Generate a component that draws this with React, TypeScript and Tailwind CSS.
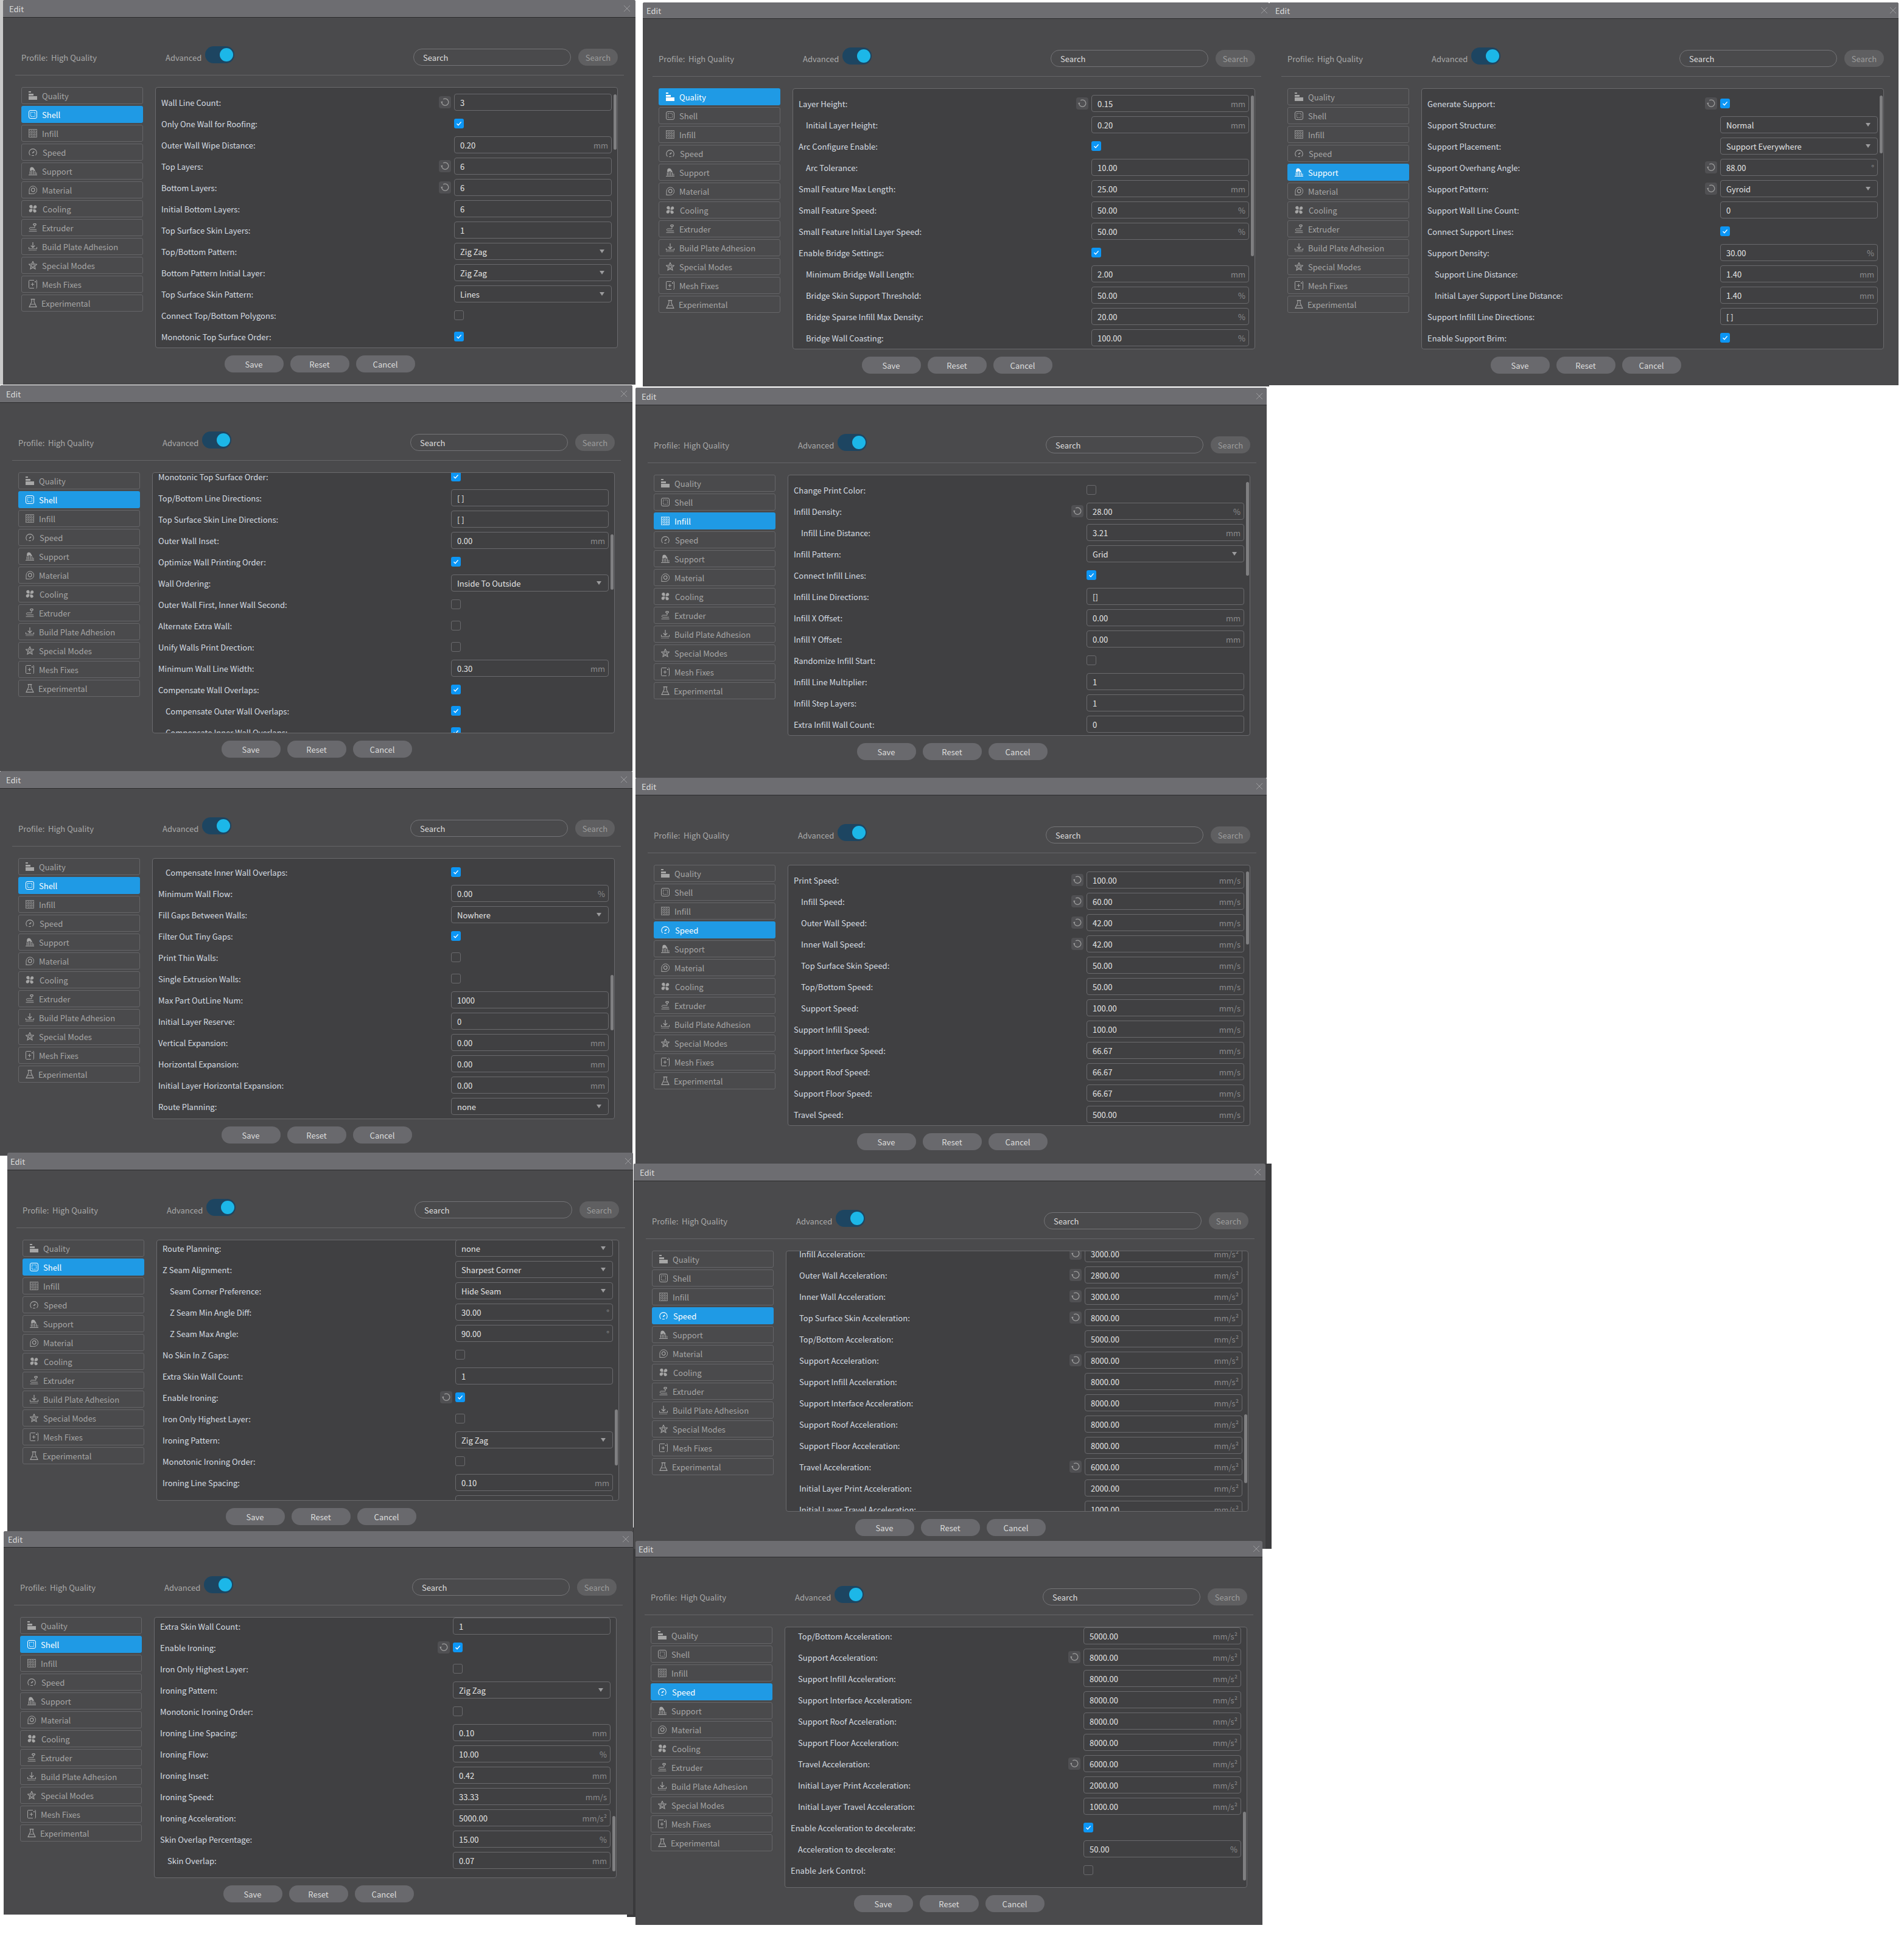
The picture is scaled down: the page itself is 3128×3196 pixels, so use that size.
type Row = { l: string; k: "i" | "s" | "c" | "u"; v?: string; u?: string; ind?: boolean; r?: boolean };

const num = (l: string, v: string, u?: string, r?: boolean, ind?: boolean): Row => ({ l, k: "i", v, u, r, ind });
const sel = (l: string, v: string, r?: boolean, ind?: boolean): Row => ({ l, k: "s", v, r, ind });
const chk = (l: string, r?: boolean, ind?: boolean): Row => ({ l, k: "c", r, ind });
const off = (l: string, ind?: boolean): Row => ({ l, k: "u", ind });
const acc = (l: string, v: string, r?: boolean): Row => num(l, v, "mm/s²", r, true);

type Win = {
  x: number; y: number; w: number; h: number; pad: number; title: number;
  active: string; top: number; barTop: number; barH: number; rows: Row[];
};

const windows: Win[] = [
  {
    x: 5, y: 0, w: 1039, h: 632, pad: 30, title: 29, active: "Shell", top: 11, barTop: 12, barH: 91,
    rows: [
      num("Wall Line Count:", "3", undefined, true), chk("Only One Wall for Roofing:"), num("Outer Wall Wipe Distance:", "0.20", "mm"),
      num("Top Layers:", "6", undefined, true), num("Bottom Layers:", "6", undefined, true), num("Initial Bottom Layers:", "6"),
      num("Top Surface Skin Layers:", "1"), sel("Top/Bottom Pattern:", "Zig Zag"), sel("Bottom Pattern Initial Layer:", "Zig Zag"),
      sel("Top Surface Skin Pattern:", "Lines"), off("Connect Top/Bottom Polygons:"), chk("Monotonic Top Surface Order:"),
    ],
  },
  {
    x: 1056, y: 4, w: 1029, h: 631, pad: 26, title: 27, active: "Quality", top: 11, barTop: 12, barH: 264,
    rows: [
      num("Layer Height:", "0.15", "mm", true), num("Initial Layer Height:", "0.20", "mm", false, true), chk("Arc Configure Enable:"),
      num("Arc Tolerance:", "10.00", undefined, false, true), num("Small Feature Max Length:", "25.00", "mm"), num("Small Feature Speed:", "50.00", "%"),
      num("Small Feature Initial Layer Speed:", "50.00", "%"), chk("Enable Bridge Settings:"), num("Minimum Bridge Wall Length:", "2.00", "mm", false, true),
      num("Bridge Skin Support Threshold:", "50.00", "%", false, true), num("Bridge Sparse Infill Max Density:", "20.00", "%", false, true),
      num("Bridge Wall Coasting:", "100.00", "%", false, true),
    ],
  },
  {
    x: 2085, y: 4, w: 1034, h: 629, pad: 30, title: 27, active: "Support", top: 11, barTop: 12, barH: 95,
    rows: [
      chk("Generate Support:", true), sel("Support Structure:", "Normal"), sel("Support Placement:", "Support Everywhere"),
      num("Support Overhang Angle:", "88.00", "°", true), sel("Support Pattern:", "Gyroid", true), num("Support Wall Line Count:", "0"),
      chk("Connect Support Lines:"), num("Support Density:", "30.00", "%"), num("Support Line Distance:", "1.40", "mm", false, true),
      num("Initial Layer Support Line Distance:", "1.40", "mm", false, true), num("Support Infill Line Directions:", "[ ]"), chk("Enable Support Brim:"),
    ],
  },
  {
    x: 0, y: 633, w: 1039, h: 634, pad: 30, title: 29, active: "Shell", top: -7, barTop: 102, barH: 91,
    rows: [
      chk("Monotonic Top Surface Order:"), num("Top/Bottom Line Directions:", "[ ]"), num("Top Surface Skin Line Directions:", "[ ]"),
      num("Outer Wall Inset:", "0.00", "mm"), chk("Optimize Wall Printing Order:"), sel("Wall Ordering:", "Inside To Outside"),
      off("Outer Wall First, Inner Wall Second:"), off("Alternate Extra Wall:"), off("Unify Walls Print Drection:"),
      num("Minimum Wall Line Width:", "0.30", "mm"), chk("Compensate Wall Overlaps:"), chk("Compensate Outer Wall Overlaps:", false, true),
      chk("Compensate Inner Wall Overlaps:", false, true),
    ],
  },
  {
    x: 1044, y: 637, w: 1037, h: 641, pad: 30, title: 29, active: "Infill", top: 11, barTop: 12, barH: 154,
    rows: [
      off("Change Print Color:"), num("Infill Density:", "28.00", "%", true), num("Infill Line Distance:", "3.21", "mm", false, true),
      sel("Infill Pattern:", "Grid"), chk("Connect Infill Lines:"), num("Infill Line Directions:", "[]"), num("Infill X Offset:", "0.00", "mm"),
      num("Infill Y Offset:", "0.00", "mm"), off("Randomize Infill Start:"), num("Infill Line Multiplier:", "1"), num("Infill Step Layers:", "1"),
      num("Extra Infill Wall Count:", "0"),
    ],
  },
  {
    x: 0, y: 1267, w: 1039, h: 632, pad: 30, title: 29, active: "Shell", top: 9, barTop: 192, barH: 91,
    rows: [
      chk("Compensate Inner Wall Overlaps:", false, true), num("Minimum Wall Flow:", "0.00", "%"), sel("Fill Gaps Between Walls:", "Nowhere"),
      chk("Filter Out Tiny Gaps:"), off("Print Thin Walls:"), off("Single Extrusion Walls:"), num("Max Part OutLine Num:", "1000"),
      num("Initial Layer Reserve:", "0"), num("Vertical Expansion:", "0.00", "mm"), num("Horizontal Expansion:", "0.00", "mm"),
      num("Initial Layer Horizontal Expansion:", "0.00", "mm"), sel("Route Planning:", "none"),
    ],
  },
  {
    x: 1044, y: 1278, w: 1037, h: 634, pad: 30, title: 29, active: "Speed", top: 11, barTop: 11, barH: 120,
    rows: [
      num("Print Speed:", "100.00", "mm/s", true), num("Infill Speed:", "60.00", "mm/s", true, true), num("Outer Wall Speed:", "42.00", "mm/s", true, true),
      num("Inner Wall Speed:", "42.00", "mm/s", true, true), num("Top Surface Skin Speed:", "50.00", "mm/s", false, true),
      num("Top/Bottom Speed:", "50.00", "mm/s", false, true), num("Support Speed:", "100.00", "mm/s", false, true), num("Support Infill Speed:", "100.00", "mm/s"),
      num("Support Interface Speed:", "66.67", "mm/s"), num("Support Roof Speed:", "66.67", "mm/s"), num("Support Floor Speed:", "66.67", "mm/s"),
      num("Travel Speed:", "500.00", "mm/s"),
    ],
  },
  {
    x: 12, y: 1894, w: 1028, h: 622, pad: 25, title: 29, active: "Shell", top: 0, barTop: 279, barH: 92,
    rows: [
      sel("Route Planning:", "none"), sel("Z Seam Alignment:", "Sharpest Corner"), sel("Seam Corner Preference:", "Hide Seam", false, true),
      num("Z Seam Min Angle Diff:", "30.00", "°", false, true), num("Z Seam Max Angle:", "90.00", "°", false, true), off("No Skin In Z Gaps:"),
      num("Extra Skin Wall Count:", "1"), chk("Enable Ironing:", true), off("Iron Only Highest Layer:"), sel("Ironing Pattern:", "Zig Zag"),
      off("Monotonic Ironing Order:"), num("Ironing Line Spacing:", "0.10", "mm"), num("Ironing Flow:", "10.00", "%"),
    ],
  },
  {
    x: 1041, y: 1912, w: 1038, h: 633, pad: 30, title: 29, active: "Speed", top: -9, barTop: 269, barH: 113,
    rows: [
      acc("Infill Acceleration:", "3000.00", true), acc("Outer Wall Acceleration:", "2800.00", true), acc("Inner Wall Acceleration:", "3000.00", true),
      acc("Top Surface Skin Acceleration:", "8000.00", true), acc("Top/Bottom Acceleration:", "5000.00"), acc("Support Acceleration:", "8000.00", true),
      acc("Support Infill Acceleration:", "8000.00"), acc("Support Interface Acceleration:", "8000.00"), acc("Support Roof Acceleration:", "8000.00"),
      acc("Support Floor Acceleration:", "8000.00"), acc("Travel Acceleration:", "6000.00", true), acc("Initial Layer Print Acceleration:", "2000.00"),
      acc("Initial Layer Travel Acceleration:", "1000.00"),
    ],
  },
  {
    x: 6, y: 2516, w: 1034, h: 630, pad: 27, title: 27, active: "Shell", top: 1, barTop: 327, barH: 91,
    rows: [
      num("Extra Skin Wall Count:", "1"), chk("Enable Ironing:", true), off("Iron Only Highest Layer:"), sel("Ironing Pattern:", "Zig Zag"),
      off("Monotonic Ironing Order:"), num("Ironing Line Spacing:", "0.10", "mm"), num("Ironing Flow:", "10.00", "%"), num("Ironing Inset:", "0.42", "mm"),
      num("Ironing Speed:", "33.33", "mm/s"), num("Ironing Acceleration:", "5000.00", "mm/s²"), num("Skin Overlap Percentage:", "15.00", "%"),
      num("Skin Overlap:", "0.07", "mm", false, true),
    ],
  },
  {
    x: 1044, y: 2532, w: 1030, h: 631, pad: 25, title: 27, active: "Speed", top: 1, barTop: 304, barH: 113,
    rows: [
      acc("Top/Bottom Acceleration:", "5000.00"), acc("Support Acceleration:", "8000.00", true), acc("Support Infill Acceleration:", "8000.00"),
      acc("Support Interface Acceleration:", "8000.00"), acc("Support Roof Acceleration:", "8000.00"), acc("Support Floor Acceleration:", "8000.00"),
      acc("Travel Acceleration:", "6000.00", true), acc("Initial Layer Print Acceleration:", "2000.00"), acc("Initial Layer Travel Acceleration:", "1000.00"),
      chk("Enable Acceleration to decelerate:"), num("Acceleration to decelerate:", "50.00", "%", false, true), off("Enable Jerk Control:"),
    ],
  },
];

function NavIcon({ name }: { name: string }) {
  const line = { fill: "none", stroke: "currentColor", strokeWidth: 1 };
  return (
    <svg viewBox="0 0 14 14" className="h-[14px] w-[14px] shrink-0">
      {name === "Quality" && (
        <g fill="currentColor">
          <rect x="0" y="0" width="4" height="2" />
          <rect x="0" y="4" width="8" height="3" />
          <rect x="0" y="8" width="14" height="6" />
        </g>
      )}
      {name === "Shell" && (
        <g {...line}>
          <rect x="0.5" y="0.5" width="13" height="13" rx="2.5" />
          <rect x="3.5" y="3.5" width="7" height="7" strokeDasharray="1.5 1.2" />
        </g>
      )}
      {name === "Infill" && (
        <g {...line} strokeWidth="0.7">
          <rect x="0.5" y="0.5" width="13" height="13" />
          <path d="M0.5 3.5L3.5 0.5M0.5 6.5L6.5 0.5M0.5 9.5L9.5 0.5M0.5 12.5L12.5 0.5M3 13.5L13.5 3M6 13.5L13.5 6M9 13.5L13.5 9M12 13.5L13.5 12" />
          <path d="M0.5 5H13.5M0.5 9H13.5M5 0.5V13.5M9 0.5V13.5" opacity="0.6" />
        </g>
      )}
      {name === "Speed" && (
        <g {...line}>
          <path d="M2.6 12.2A6.2 6.2 0 1 1 11.4 12.2" strokeWidth="1.1" />
          <path d="M6.2 8.6L9.2 5.8" strokeWidth="1.6" />
          <path d="M5 12.5H9" />
        </g>
      )}
      {name === "Support" && (
        <g fill="currentColor">
          <path d="M3.2 1.2C5 -0.2 7.6 0.5 8.6 2.6L11 6.4 9 7 7 5.2 4.6 6.2 2.2 7C2 4.6 2.2 2.4 3.2 1.2Z" />
          <path d="M1.8 7.5H3V12.5H1.8ZM4.4 6.8H5.6V12.5H4.4ZM7.2 6.4H8.4V12.5H7.2ZM10 7.5H11.2V12.5H10ZM12.4 9.4H13.4V12.5H12.4Z" />
          <rect x="0" y="13" width="14" height="1" />
        </g>
      )}
      {name === "Material" && (
        <g {...line}>
          <path d="M1 14V7A6.3 6.3 0 1 1 6.8 13.4H1" />
          <circle cx="7.2" cy="7" r="2.8" strokeWidth="1.2" />
        </g>
      )}
      {name === "Cooling" && (
        <g fill="currentColor">
          <path d="M6.4 6.2C4 6.6 1.4 5.6 1.2 3.4 1 1.4 3.2 0.2 4.8 0.8 6.6 1.4 7 4 6.4 6.2Z" />
          <path d="M7.8 6.4C7.4 4 8.4 1.4 10.6 1.2 12.6 1 13.8 3.2 13.2 4.8 12.6 6.6 10 7 7.8 6.4Z" />
          <path d="M7.6 7.8C10 7.4 12.6 8.4 12.8 10.6 13 12.6 10.8 13.8 9.2 13.2 7.4 12.6 7 10 7.6 7.8Z" />
          <path d="M6.2 7.6C6.6 10 5.6 12.6 3.4 12.8 1.4 13 0.2 10.8 0.8 9.2 1.4 7.4 4 7 6.2 7.6Z" />
        </g>
      )}
      {name === "Extruder" && (
        <g {...line}>
          <ellipse cx="10" cy="1.8" rx="2.2" ry="1.5" strokeWidth="1.3" />
          <path d="M10 3.5V7H2.5A1.7 1.7 0 0 0 2.5 10.2H13" />
          <path d="M0.5 13H13.5" />
        </g>
      )}
      {name === "Build Plate Adhesion" && (
        <g {...line}>
          <path d="M7 0V8.5M3.8 5.5L7 8.8 10.2 5.5" strokeWidth="1.2" />
          <path d="M0.5 8V11H13.5V8" />
          <path d="M0.5 13.5H13.5" strokeDasharray="1.2 1" />
        </g>
      )}
      {name === "Special Modes" && (
        <g {...line}>
          <path d="M7 0.6L8.9 4.8 13.5 5.3 10.1 8.4 11 13 7 10.7 3 13 3.9 8.4 0.5 5.3 5.1 4.8Z" strokeWidth="1.1" />
          <path d="M7 4.4L8 6.2 10 6.5 8.6 8 8.9 10 7 9.1 5.1 10 5.4 8 4 6.5 6 6.2Z" strokeWidth="0.8" />
        </g>
      )}
      {name === "Mesh Fixes" && (
        <g {...line}>
          <path d="M9 0.5H1.5A1 1 0 0 0 0.5 1.5V12.5A1 1 0 0 0 1.5 13.5H9M12 0.5H12.5A1 1 0 0 1 13.5 1.5V12.5A1 1 0 0 1 12.5 13.5H12" />
          <path d="M6.5 4.5V10M3.8 7.2H9.2" />
          <circle cx="11" cy="3" r="0.7" fill="currentColor" />
        </g>
      )}
      {name === "Experimental" && (
        <g {...line}>
          <path d="M3.6 0.6H10.4M5 0.6V5L1 13.4H13L9 5V0.6" strokeWidth="1.1" />
          <path d="M3.4 9H10.6" />
        </g>
      )}
    </svg>
  );
}

const navItems = [
  { name: "Quality", text: "" }, { name: "Shell", text: "" }, { name: "Infill", text: "" }, { name: "Speed", text: "ml-px" },
  { name: "Support", text: "" }, { name: "Material", text: "" }, { name: "Cooling", text: "ml-px" }, { name: "Extruder", text: "" },
  { name: "Build Plate Adhesion", text: "" }, { name: "Special Modes", text: "" }, { name: "Mesh Fixes", text: "" }, { name: "Experimental", text: "-ml-px" },
];

function ResetIcon() {
  return (
    <div className="mr-[5px] flex h-[20px] w-[20px] items-center justify-center rounded-[4px] bg-[#505053] text-[#9c9c9c]">
      <svg viewBox="0 0 14 14" className="h-[14px] w-[14px]" fill="none" stroke="currentColor" strokeWidth="1.3">
        <path d="M4.2 2A5.6 5.6 0 1 1 1.6 6.8" />
        <path d="M0 6.2L3.4 5.6 2.2 9Z" fill="currentColor" stroke="none" />
      </svg>
    </div>
  );
}

function Field({ row }: { row: Row }) {
  if (row.k === "c" || row.k === "u") {
    return (
      <div className="flex w-[259px] items-center">
        {row.k === "c" ? (
          <div className="flex h-[16px] w-[16px] items-center justify-center rounded-[3px] bg-[#0c96f5]">
            <svg viewBox="0 0 10 10" className="h-[10px] w-[10px]" fill="none" stroke="#fff" strokeWidth="1.4">
              <path d="M1.5 5.2L4 7.8 8.6 2.4" />
            </svg>
          </div>
        ) : (
          <div className="h-[16px] w-[16px] rounded-[3px] border border-[#6a6a6d]" />
        )}
      </div>
    );
  }
  return (
    <div className="flex h-[28px] w-[259px] items-center justify-between rounded-[4px] border border-[#6a6a6d] pl-[9px] pr-[5px]">
      <span className="text-[#e4e4e4]">{row.v}</span>
      {row.k === "i" && row.u && <span className="text-[#8a8a8c]">{row.u}</span>}
      {row.k === "s" && (
        <svg viewBox="0 0 8 6" className="mr-[6px] h-[6px] w-[8px]">
          <path d="M0 0H8L4 6Z" fill="#9c9c9e" />
        </svg>
      )}
    </div>
  );
}

function Dialog({ win }: { win: Win }) {
  return (
    <div
      className="absolute flex flex-col overflow-hidden rounded-t-[3px] bg-[#4a4a4c] text-[13px] leading-none"
      style={{ left: win.x, top: win.y, width: win.w, height: win.h }}
    >
      <div
        className="flex shrink-0 items-center border-b border-[#2b2b2d] bg-[#6d6d71] text-[#dcdcdc]"
        style={{ height: win.title }}
      >
        <div className="flex w-[1021px] shrink-0 items-center justify-between" style={{ marginLeft: win.pad - 20 }}>
          <span>Edit</span>
          <svg viewBox="0 0 12 12" className="h-[12px] w-[12px]" fill="none" stroke="#9b9b9e" strokeWidth="1">
            <path d="M1 1L11 11M11 1L1 11" />
          </svg>
        </div>
      </div>
      <div className="flex w-[980px] flex-col" style={{ marginLeft: win.pad }}>
        <div className="mt-[51px] flex h-[28px] items-center text-[#a9a9a9]">
          <span className="w-[49px]">Profile:</span>
          <span className="w-[188px]">High Quality</span>
          <span className="w-[65px]">Advanced</span>
          <div className="mb-2 flex h-[28px] w-[48px] items-center justify-end rounded-full bg-[#1d4561] pr-[2px]">
            <div className="h-[22px] w-[22px] rounded-full bg-[#1cb7e8]" />
          </div>
          <div className="ml-auto flex h-[28px] w-[259px] items-center rounded-full border border-[#747477] pl-[15px] text-[#dfdfdf]">Search</div>
          <div className="ml-[12px] flex h-[28px] w-[65px] items-center justify-center rounded-full bg-[#5f5f61] text-[#9d9d9d]">Search</div>
        </div>
        <div className="mx-[-10px] mt-[15px] h-px bg-[#656568]" />
        <div className="mt-[19px] flex gap-[20px]">
          <div className="flex w-[200px] shrink-0 flex-col gap-[3px]">
            {navItems.map((item) => (
              <div
                key={item.name}
                className={
                  item.name === win.active
                    ? "flex h-[28px] items-center gap-[8px] rounded-[3px] bg-[#1f9ae5] pl-[12px] text-white"
                    : "flex h-[28px] items-center gap-[8px] rounded-[3px] border border-[#666669] pl-[11px] text-[#a6a6a6]"
                }
              >
                <NavIcon name={item.name} />
                <span className={item.text}>{item.name}</span>
              </div>
            ))}
          </div>
          <div className="relative h-[429px] w-[760px] overflow-hidden rounded-[4px] border border-[#6a6a6d] bg-[#404042]">
            <div className="flex flex-col gap-[7px] px-[9px]" style={{ marginTop: win.top - 1 }}>
              {win.rows.map((row) => (
                <div key={row.l} className="flex h-[28px] shrink-0 items-center text-[#d6dde2]">
                  <span className={row.ind ? "ml-[12px]" : ""}>{row.l}</span>
                  <div className="ml-auto flex items-center">
                    {row.r && <ResetIcon />}
                    <Field row={row} />
                  </div>
                </div>
              ))}
            </div>
            <div
              className="absolute right-px w-[5px] rounded-full bg-[#7f7f81]"
              style={{ top: win.barTop - 1, height: win.barH }}
            />
          </div>
        </div>
        <div className="mt-[12px] flex justify-center gap-[11px] text-[#dedede]">
          <div className="flex h-[28px] w-[97px] items-center justify-center rounded-[14px] bg-[#69696d]">Save</div>
          <div className="flex h-[28px] w-[97px] items-center justify-center rounded-[14px] bg-[#69696d]">Reset</div>
          <div className="flex h-[28px] w-[97px] items-center justify-center rounded-[14px] bg-[#69696d]">Cancel</div>
        </div>
      </div>
    </div>
  );
}

export default function App() {
  return (
    <div className="relative h-[3196px] w-[3128px] overflow-hidden bg-white font-['Noto_Sans_CJK_SC','Noto_Sans',sans-serif]">
      <div className="absolute left-[2060px] top-[1912px] h-[633px] w-[29px] bg-[#3c3c3e]" />
      <div className="absolute left-[0px] top-[0px] h-[632px] w-[6px] bg-[#c9c9c9]" />
      <div className="absolute left-[1030px] top-[2510px] h-[640px] w-[14px] bg-[#3a3a3c]" />
      {windows.map((win) => (
        <Dialog key={`${win.x}-${win.y}`} win={win} />
      ))}
    </div>
  );
}
